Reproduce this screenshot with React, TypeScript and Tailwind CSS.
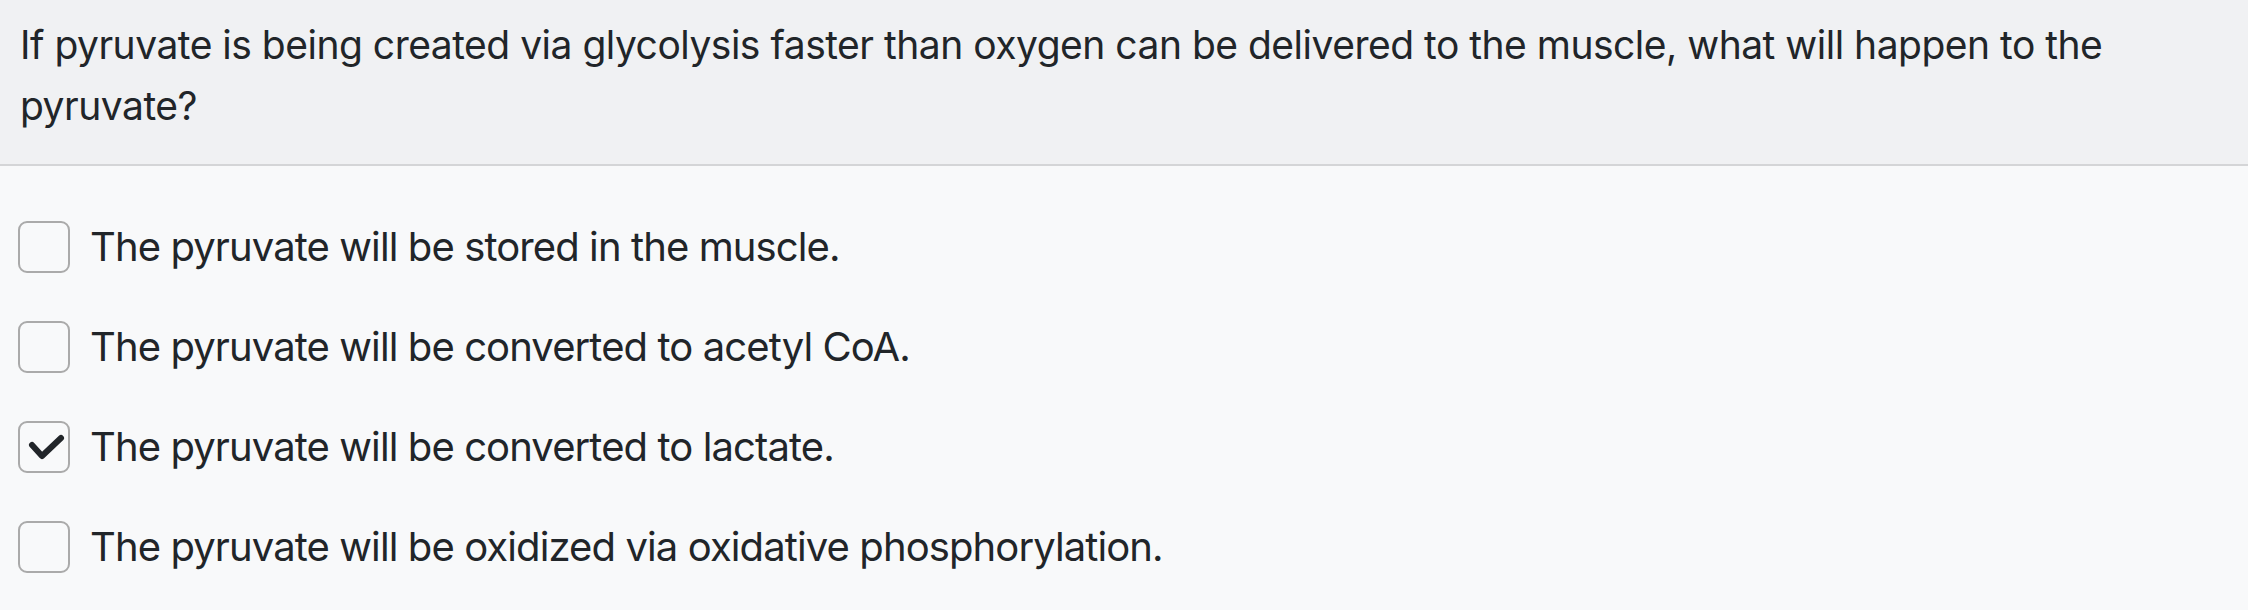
import React from "react";

const options = [
  { text: "The pyruvate will be stored in the muscle.", checked: false },
  { text: "The pyruvate will be converted to acetyl CoA.", checked: false },
  { text: "The pyruvate will be converted to lactate.", checked: true },
  { text: "The pyruvate will be oxidized via oxidative phosphorylation.", checked: false },
];

export default function App() {
  return (
    <div
      className="w-[2248px] h-[610px] bg-[#f8f9fa] text-[#212529] overflow-hidden"
      style={{ fontFamily: "Inter, 'Noto Sans', sans-serif" }}
    >
      <div className="bg-[#f0f1f3] border-b-2 border-[#d4d5d7] px-[20px] pt-[14px] h-[166px] text-[39px] leading-[61px] tracking-[-0.5px]">
        If pyruvate is being created via glycolysis faster than oxygen can be delivered to the muscle, what will happen to the pyruvate?
      </div>
      <div className="flex flex-col pt-[31px]">
        {options.map((o, i) => (
          <div key={i} className="flex items-center h-[100px]">
            <div className="ml-[18px] w-[52px] h-[52px] rounded-[9px] border-2 border-[#aaaaaa] flex items-center justify-center shrink-0">
              {o.checked && (
                <svg width="48" height="48" viewBox="0 0 48 48">
                  <path d="M12 22 L22 33 L41 15" fill="none" stroke="#212529" strokeWidth="6" strokeLinecap="round" strokeLinejoin="round" />
                </svg>
              )}
            </div>
            <div className="ml-[20px] text-[40px] leading-[50px] tracking-[-0.9px]">{o.text}</div>
          </div>
        ))}
      </div>
    </div>
  );
}
